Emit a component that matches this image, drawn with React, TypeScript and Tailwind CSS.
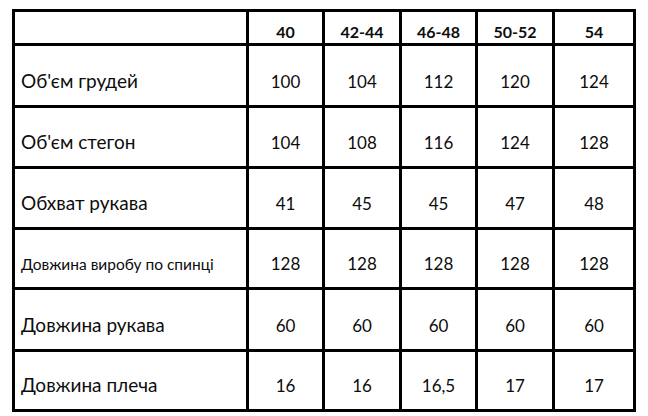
import React from "react";

const sizes = ["40", "42-44", "46-48", "50-52", "54"];

const rows: { label: string; small?: boolean; values: string[]; h: string }[] = [
  { label: "Об'єм грудей", values: ["100", "104", "112", "120", "124"], h: "h-[59px]" },
  { label: "Об'єм стегон", values: ["104", "108", "116", "124", "128"], h: "h-[58px]" },
  { label: "Обхват рукава", values: ["41", "45", "45", "47", "48"], h: "h-[58px]" },
  { label: "Довжина виробу по спинці", small: true, values: ["128", "128", "128", "128", "128"], h: "h-[57px]" },
  { label: "Довжина рукава", values: ["60", "60", "60", "60", "60"], h: "h-[59px]" },
  { label: "Довжина плеча", values: ["16", "16", "16,5", "17", "17"], h: "h-[57px]" },
];

export default function App() {
  return (
    <div className="w-[648px] h-[416px] bg-white pt-[9px] pl-[12px] text-[#0d0d0d]" style={{ fontFamily: "Lato, 'Open Sans', sans-serif" }}>
      <div className="inline-grid grid-cols-[231px_73px_74px_73px_74px_78px] gap-[3px] p-[3px] bg-black">
        {/* header */}
        <div className="bg-white h-[31px]" />
        {sizes.map((s) => (
          <div key={s} className="bg-white h-[31px] flex items-end justify-center pb-[3px] text-[16px] font-bold leading-none">
            {s}
          </div>
        ))}

        {rows.map((r) => (
          <React.Fragment key={r.label}>
            <div
              className={`bg-white ${r.h} flex items-end pl-[6px] pb-[15px] leading-none ${r.small ? "text-[15.5px]" : "text-[19px]"}`}
            >
              {r.label}
            </div>
            {r.values.map((v, i) => (
              <div key={i} className={`bg-white ${r.h} flex items-end justify-center pb-[15px] text-[17px] leading-none`}>
                {v}
              </div>
            ))}
          </React.Fragment>
        ))}
      </div>
    </div>
  );
}
